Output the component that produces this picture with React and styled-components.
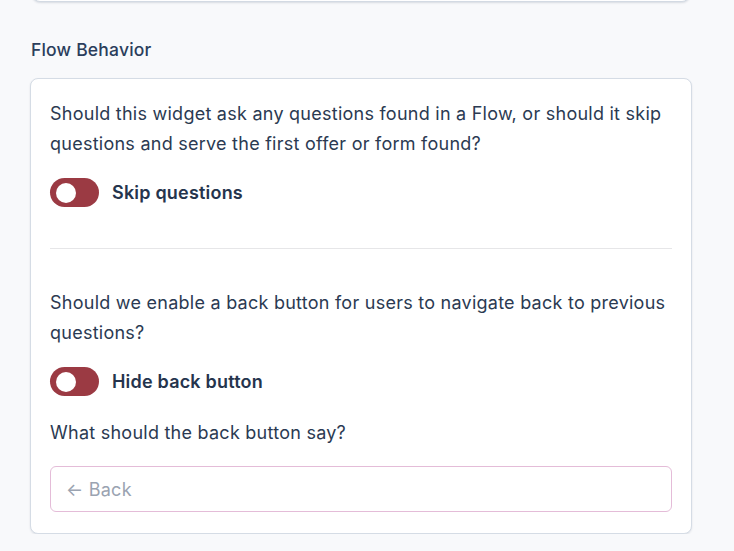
import React from 'react'
import styled, { createGlobalStyle } from 'styled-components'

const Global = createGlobalStyle`
  body {
    margin: 0;
    background: #f8f9fb;
    font-family: Inter, "Noto Sans", sans-serif;
    color: #2b3a52;
  }
`

const Page = styled.div`
  padding: 0 42px 0 30px;
`

const TopCard = styled.div`
  height: 8px;
  margin: -8px 2px 0 2px;
  background: #fff;
  border: 1px solid #d3dae3;
  border-radius: 0 0 8px 8px;
  box-shadow: 0 1px 2px rgba(40, 60, 90, 0.15);
`

const Heading = styled.h2`
  margin: 36px 0 0 1px;
  font-size: 17.5px;
  font-weight: 500;
  letter-spacing: 0.2px;
  line-height: 24px;
  color: #2b3e5c;
`

const Card = styled.div`
  margin-top: 16px;
  background: #fff;
  border: 1px solid #d5dce5;
  border-radius: 8px;
  box-shadow: 0 1px 2px rgba(40, 60, 90, 0.12);
  padding: 20px 19px 21px;
`

const Question = styled.p`
  margin: ${p => p.$top || 0}px 0 0;
  font-size: 18px;
  letter-spacing: 0.25px;
  line-height: 30px;
  color: #2b3a52;
`

const ToggleRow = styled.label`
  display: flex;
  align-items: center;
  gap: 13px;
  margin-top: 19px;
  font-size: 18px;
  letter-spacing: 0.2px;
  font-weight: 600;
  color: #25344d;
`

const Track = styled.span`
  position: relative;
  width: 49px;
  height: 29px;
  border-radius: 15px;
  background: #9b3a43;
  flex-shrink: 0;

  &::after {
    content: '';
    position: absolute;
    top: 4.5px;
    left: 6px;
    width: 20px;
    height: 20px;
    border-radius: 50%;
    background: #fff;
  }
`

const Divider = styled.hr`
  margin: 41px 0 39px;
  border: 0;
  border-top: 1px solid #e6e6e8;
`

const Field = styled.input`
  display: block;
  box-sizing: border-box;
  width: 100%;
  height: 46px;
  margin-top: 18px;
  padding: 0 15px;
  border: 1px solid #e4bcd8;
  border-radius: 6px;
  font-family: inherit;
  font-size: 18px;
  letter-spacing: 0.25px;
  color: #2b3a52;
  outline: none;

  &::placeholder {
    color: #9aa3b1;
  }
`

export default function App() {
  return (
    <>
      <Global />
      <Page>
        <TopCard />
        <Heading>Flow Behavior</Heading>
        <Card>
          <Question>
            Should this widget ask any questions found in a Flow, or should it skip
            questions and serve the first offer or form found?
          </Question>
          <ToggleRow>
            <Track />
            Skip questions
          </ToggleRow>
          <Divider />
          <Question>
            Should we enable a back button for users to navigate back to previous
            questions?
          </Question>
          <ToggleRow>
            <Track />
            Hide back button
          </ToggleRow>
          <Question $top={22}>What should the back button say?</Question>
          <Field placeholder="← Back" />
        </Card>
      </Page>
    </>
  )
}
